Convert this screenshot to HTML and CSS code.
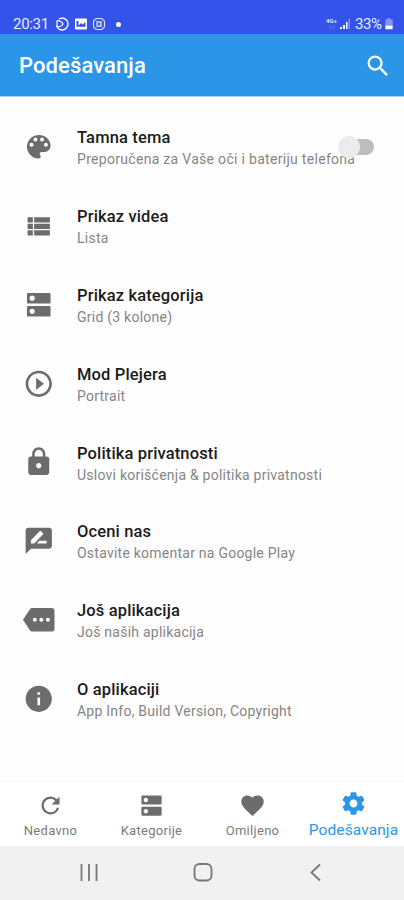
FILE: index.html
```
<!DOCTYPE html>
<html lang="sr">
<head>
<meta charset="utf-8">
<meta name="viewport" content="width=device-width">
<title>Podešavanja</title>
<link rel="stylesheet" href="styles.css">
</head>
<body>
<div class="phone">
  <div class="status">
    <span class="clock">20:31</span>
    <svg class="st-icon" viewBox="0 0 14 14"><path d="M4 2A5.9 5.9 0 1 1 2 10" fill="none" stroke="#fff" stroke-width="1.4"/><path d="M1.500 4C4 3 7 4.500 8 7 6.500 9.500 3.500 10.500 1 9M2 4v5" fill="none" stroke="#fff" stroke-width="1.2"/></svg>
    <svg class="st-icon" viewBox="0 0 14 14"><path fill="#fff" fill-rule="evenodd" d="M2 1.500h10a1 1 0 0 1 1 1v9a1 1 0 0 1-1 1H2a1 1 0 0 1-1-1v-9a1 1 0 0 1 1-1zM2.500 9.800h9V5L8.500 7.500 7 6 4.500 8.500V4h-2z"/></svg>
    <svg class="st-icon" viewBox="0 0 14 14"><g fill="none" stroke="#fff" stroke-opacity=".85"><rect x="1.500" y="1.500" width="11" height="11" rx="4" stroke-width="1.200"/><circle cx="7" cy="7" r="2.200" stroke-width="1.300"/><path d="M4 3.500l1.500 1.500M10 3.500L8.500 5M4 10.500L5.500 9M10 10.500L8.500 9"/></g></svg>
    <span class="dot"></span>
    <span class="network"><b>4G+</b><i>↓↑</i></span>
    <svg class="signal" viewBox="0 0 12 12"><path fill="#fff" d="M1 9h2v2H1zM4 7h2v4H4zM7 4h1.500v7H7z"/><path fill="#fff" opacity=".4" d="M9.500 1H11v10H9.500z"/></svg>
    <span class="battery-text">33%</span>
    <svg class="battery" viewBox="0 0 8 13"><path fill="#fff" opacity=".4" d="M2.500 0h3v1.500H8V8H0V1.500h2.500z"/><path fill="#fff" d="M0 8h8v3.500a.8.8 0 0 1-.8.8H.8a.8.8 0 0 1-.8-.8z"/></svg>
  </div>
  <header class="bar">
    <h1>Podešavanja</h1>
    <svg class="search" viewBox="0 0 24 24"><path d="M15.500 14h-.79l-.28-.27A6.471 6.471 0 0 0 16 9.500 6.500 6.500 0 1 0 9.500 16c1.610 0 3.090-.59 4.230-1.570l.27.28v.79l5 4.990L20.490 19l-4.990-5zm-6 0C7.010 14 5 11.990 5 9.500S7.010 5 9.500 5 14 7.010 14 9.500 11.990 14 9.500 14z"/></svg>
  </header>
  <main class="list">
    <section class="row">
      <svg class="icon" viewBox="0 0 24 24"><path d="M12 3c-4.970 0-9 4.030-9 9s4.030 9 9 9c.83 0 1.500-.67 1.500-1.500 0-.39-.15-.74-.39-1.010-.23-.26-.38-.61-.38-.99 0-.83.67-1.500 1.500-1.500H16c2.760 0 5-2.240 5-5 0-4.420-4.030-8-9-8zm-5.500 9c-.83 0-1.500-.67-1.500-1.500S5.670 9 6.500 9 8 9.670 8 10.500 7.330 12 6.500 12zm3-4C8.670 8 8 7.330 8 6.500S8.670 5 9.500 5s1.500.67 1.500 1.500S10.330 8 9.500 8zm5 0c-.83 0-1.500-.67-1.500-1.500S13.670 5 14.500 5s1.500.67 1.500 1.500S15.330 8 14.500 8zm3 4c-.83 0-1.500-.67-1.500-1.500S16.670 9 17.500 9s1.500.67 1.500 1.500-.67 1.500-1.500 1.500z"/></svg>
      <div class="text"><h2>Tamna tema</h2><p class="wide">Preporučena za Vaše oči i bateriju telefona</p></div>
      <span class="switch"></span>
    </section>
    <section class="row">
      <svg class="icon" viewBox="0 0 24 24"><path d="M3.500 14.500h4v-4h-4v4zm0 5h4v-4h-4v4zm0-10h4v-4h-4v4zm5 5h12v-4h-12v4zm0 5h12v-4h-12v4zm0-14v4h12v-4h-12z"/></svg>
      <div class="text"><h2>Prikaz videa</h2><p>Lista</p></div>
    </section>
    <section class="row">
      <svg class="icon" viewBox="0 0 24 24"><path d="M20 13H4c-.55 0-1 .45-1 1v6c0 .55.45 1 1 1h16c.55 0 1-.45 1-1v-6c0-.55-.45-1-1-1zM7 19c-1.100 0-2-.9-2-2s.9-2 2-2 2 .9 2 2-.9 2-2 2zM20 3H4c-.55 0-1 .45-1 1v6c0 .55.45 1 1 1h16c.55 0 1-.45 1-1V4c0-.55-.45-1-1-1zM7 9c-1.100 0-2-.9-2-2s.9-2 2-2 2 .9 2 2-.9 2-2 2z"/></svg>
      <div class="text"><h2>Prikaz kategorija</h2><p>Grid (3 kolone)</p></div>
    </section>
    <section class="row">
      <svg class="icon" viewBox="0 0 24 24"><path d="M10 16.500l6-4.500-6-4.500v9zM12 2C6.480 2 2 6.480 2 12s4.480 10 10 10 10-4.480 10-10S17.520 2 12 2zm0 18c-4.410 0-8-3.590-8-8s3.590-8 8-8 8 3.590 8 8-3.590 8-8 8z"/></svg>
      <div class="text"><h2>Mod Plejera</h2><p>Portrait</p></div>
    </section>
    <section class="row">
      <svg class="icon" viewBox="0 0 24 24"><path d="M18 8h-1V6c0-2.760-2.240-5-5-5S7 3.240 7 6v2H6c-1.100 0-2 .9-2 2v10c0 1.100.9 2 2 2h12c1.100 0 2-.9 2-2V10c0-1.100-.9-2-2-2zm-6 9c-1.100 0-2-.9-2-2s.9-2 2-2 2 .9 2 2-.9 2-2 2zm3.100-9H8.900V6c0-1.710 1.390-3.100 3.100-3.100s3.100 1.390 3.100 3.100v2z"/></svg>
      <div class="text"><h2>Politika privatnosti</h2><p>Uslovi korišćenja &amp; politika privatnosti</p></div>
    </section>
    <section class="row">
      <svg class="icon" viewBox="0 0 24 24"><path d="M20 2H4c-1.100 0-1.990.9-1.990 2L2 22l4-4h14c1.100 0 2-.9 2-2V4c0-1.100-.9-2-2-2zM6 14v-2.470l6.880-6.880c.2-.2.510-.2.710 0l1.770 1.770c.2.200.2.510 0 .71L8.470 14H6zm12 0h-7.500l2-2H18v2z"/></svg>
      <div class="text"><h2>Oceni nas</h2><p>Ostavite komentar na Google Play</p></div>
    </section>
    <section class="row">
      <svg class="icon" viewBox="0 0 24 24"><path d="M22 3H7c-.69 0-1.230.35-1.590.88L0 12l5.410 8.110c.36.530.97.890 1.660.89H22c1.100 0 2-.9 2-2V5c0-1.100-.9-2-2-2zM9 13.500c-.83 0-1.500-.67-1.500-1.500s.67-1.500 1.500-1.500 1.500.67 1.500 1.500-.67 1.500-1.500 1.500zm5 0c-.83 0-1.500-.67-1.500-1.500s.67-1.500 1.500-1.500 1.500.67 1.500 1.500-.67 1.500-1.500 1.500zm5 0c-.83 0-1.500-.67-1.500-1.500s.67-1.500 1.500-1.500 1.500.67 1.500 1.500-.67 1.500-1.500 1.500z"/></svg>
      <div class="text"><h2>Još aplikacija</h2><p>Još naših aplikacija</p></div>
    </section>
    <section class="row">
      <svg class="icon" viewBox="0 0 24 24"><path d="M12 2C6.480 2 2 6.480 2 12s4.480 10 10 10 10-4.480 10-10S17.520 2 12 2zm1 15h-2v-6h2v6zm0-8h-2V7h2v2z"/></svg>
      <div class="text"><h2>O aplikaciji</h2><p>App Info, Build Version, Copyright</p></div>
    </section>
  </main>
  <nav class="tabs">
    <div class="tab"><svg viewBox="0 0 24 24"><path d="M17.650 6.350A7.958 7.958 0 0 0 12 4a8 8 0 1 0 7.730 10h-2.080A5.990 5.990 0 0 1 12 18a6 6 0 1 1 0-12c1.660 0 3.140.69 4.220 1.780L13 11h7V4l-2.350 2.350z"/></svg><span>Nedavno</span></div>
    <div class="tab"><svg viewBox="0 0 24 24"><path d="M20 13H4c-.55 0-1 .45-1 1v6c0 .55.45 1 1 1h16c.55 0 1-.45 1-1v-6c0-.55-.45-1-1-1zM7 19c-1.100 0-2-.9-2-2s.9-2 2-2 2 .9 2 2-.9 2-2 2zM20 3H4c-.55 0-1 .45-1 1v6c0 .55.45 1 1 1h16c.55 0 1-.45 1-1V4c0-.55-.45-1-1-1zM7 9c-1.100 0-2-.9-2-2s.9-2 2-2 2 .9 2 2-.9 2-2 2z"/></svg><span>Kategorije</span></div>
    <div class="tab"><svg viewBox="0 0 24 24"><path d="M12 21.350l-1.450-1.320C5.400 15.360 2 12.280 2 8.500 2 5.420 4.420 3 7.500 3c1.740 0 3.410.81 4.500 2.090C13.090 3.810 14.760 3 16.500 3 19.580 3 22 5.420 22 8.500c0 3.780-3.400 6.860-8.550 11.540L12 21.350z"/></svg><span>Omiljeno</span></div>
    <div class="tab active"><svg viewBox="0 0 24 24"><path d="M19.430 12.980c.04-.32.070-.64.070-.98s-.03-.66-.07-.98l2.110-1.650c.19-.15.240-.42.120-.64l-2-3.460c-.12-.22-.39-.3-.61-.22l-2.490 1c-.52-.4-1.080-.73-1.690-.98l-.38-2.650A.488.488 0 0 0 14 2h-4c-.25 0-.46.18-.49.42l-.38 2.650c-.61.250-1.170.590-1.690.980l-2.490-1c-.23-.09-.49 0-.61.220l-2 3.460c-.13.220-.07.490.12.640l2.110 1.650c-.04.320-.07.650-.07.980s.03.660.07.980l-2.110 1.650c-.19.150-.24.420-.12.640l2 3.460c.12.220.39.300.61.220l2.490-1c.52.400 1.080.730 1.690.980l.38 2.650c.03.240.240.420.490.420h4c.25 0 .46-.18.490-.42l.38-2.650c.61-.25 1.170-.59 1.690-.98l2.490 1c.23.090.49 0 .61-.22l2-3.460c.12-.22.070-.49-.12-.64l-2.110-1.650zM12 15.500c-1.930 0-3.500-1.570-3.500-3.500s1.570-3.500 3.500-3.500 3.500 1.570 3.500 3.500-1.570 3.500-3.500 3.500z"/></svg><span>Podešavanja</span></div>
  </nav>
  <footer class="system">
    <svg viewBox="0 0 24 24"><path d="M4.500 4v17M12 4v17M19.500 4v17"/></svg>
    <svg viewBox="0 0 24 24"><rect x="3.500" y="4" width="17" height="16.500" rx="5"/></svg>
    <svg viewBox="0 0 24 24"><path d="M16 4.500L7.500 12.500l8.500 8"/></svg>
  </footer>
</div>
</body>
</html>
```
FILE: styles.css
```
* { box-sizing: border-box; }
body { margin: 0; font-family: Roboto, sans-serif; background: #fefefe; }
h1, h2, p { margin: 0; font-weight: 400; white-space: nowrap; }
svg { display: block; flex: none; }
.phone { width: 404px; height: 900px; display: flex; flex-direction: column; overflow: hidden; }

.status { height: 34px; flex: none; background: #3453eb; color: #e9edff; display: flex; align-items: center; padding: 14px 11px 0 13px; font-size: 15px; line-height: 20px; }
.clock { width: 37px; letter-spacing: -0.3px; margin-right: 5px; }
.st-icon { width: 14px; height: 14px; margin-right: 4.500px; }
.dot { width: 5px; height: 5px; border-radius: 50%; background: #fff; margin-left: 5.500px; }
.network { margin-left: auto; width: 13px; font-size: 6px; line-height: 6px; display: flex; flex-direction: column; align-items: center; }
.network i { font-style: normal; opacity: .6; }
.signal { width: 12px; height: 12px; margin: 0 4px 0 1px; }
.battery-text { letter-spacing: -0.4px; width: 28px; }
.battery { width: 8px; height: 12px; margin-left: 2px; }

.bar { height: 63px; flex: none; background: #2b96e8; border-bottom: 1px solid #a9d2f3; color: #fff; display: flex; align-items: center; justify-content: space-between; padding: 2px 12px 0 19px; }
.bar h1 { font-size: 22px; font-weight: 500; line-height: 28px; letter-spacing: 0.1px; }
.search { width: 28px; height: 28px; fill: #fff; }

.list { flex: 1; padding-top: 10.600px; }
.row { height: 78.800px; display: flex; align-items: center; padding-left: 23px; position: relative; }
.icon { width: 31.500px; height: 31.500px; fill: #6c6c6c; margin-right: 22.500px; }
.text { display: flex; flex-direction: column; gap: 1px; padding-top: 3px; }
.text h2 { font-size: 16.500px; line-height: 21px; font-weight: 500; color: #1b1b1b; letter-spacing: 0.14px; }
.text p { font-size: 14px; line-height: 20px; color: #858585; letter-spacing: 0.24px; }
.text .wide { letter-spacing: 0.3px; }
.switch { position: absolute; right: 30px; top: 31px; width: 32px; height: 16px; border-radius: 8px; background: #bdbdbd; }
.switch::before { content: ""; position: absolute; left: -4px; top: -3px; width: 22px; height: 22px; border-radius: 50%; background: #ececec; }

.tabs { height: 65px; flex: none; display: flex; background: #fff; border-top: 1px solid #f8f8f8; color: #7c7c7c; fill: #6c6c6c; }
.tab { width: 101px; display: flex; flex-direction: column; align-items: center; padding-top: 10px; }
.tab svg { width: 27px; height: 27px; }
.tab span { font-size: 13px; line-height: 18px; margin-top: 3px; letter-spacing: 0.3px; }
.tab.active { color: #2b96e8; fill: #2b96e8; padding-top: 8px; }
.tab.active span { font-size: 15.500px; line-height: 20px; letter-spacing: 0.1px; }

.system { height: 54px; flex: none; background: #f1f1f1; display: flex; justify-content: space-between; align-items: center; padding: 0 75px 2px 76px; }
.system svg { width: 26px; height: 24px; fill: none; stroke: #777; stroke-width: 1.800; }
```
